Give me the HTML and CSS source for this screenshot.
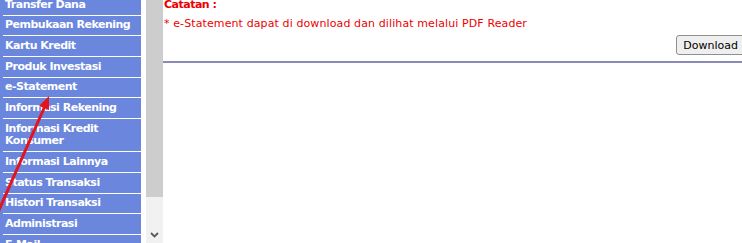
FILE: index.html
```html
<!DOCTYPE html>
<html lang="id">
<head>
    <meta charset="UTF-8">
    <title>e-Statement</title>
    <link rel="stylesheet" href="styles.css">
</head>
<body>
    <div class="frame">
        <div class="sidebar">
            <div class="menu">
                <ul>
                    <li><a href="#">Transfer Dana</a></li>
                    <li><a href="#">Pembukaan Rekening</a></li>
                    <li><a href="#">Kartu Kredit</a></li>
                    <li><a href="#">Produk Investasi</a></li>
                    <li><a href="#">e-Statement</a></li>
                    <li><a href="#">Informasi Rekening</a></li>
                    <li><a href="#">Informasi Kredit Konsumer</a></li>
                    <li><a href="#">Informasi Lainnya</a></li>
                    <li><a href="#">Status Transaksi</a></li>
                    <li><a href="#">Histori Transaksi</a></li>
                    <li><a href="#">Administrasi</a></li>
                    <li><a href="#">E-Mail</a></li>
                </ul>
            </div>
            <div class="gap"></div>
            <div class="scrollbar">
                <div class="thumb"></div>
                <div class="track">
                    <svg class="arrow-down" width="9" height="6" viewBox="0 0 9 6">
                        <path d="M1 1 L4.5 4.5 L8 1" fill="none" stroke="#5a5a5a" stroke-width="1.8"/>
                    </svg>
                </div>
            </div>
        </div>

        <div class="main">
            <div class="note-title">Catatan :</div>
            <div class="note">* e-Statement dapat di download dan dilihat melalui PDF Reader</div>
            <div class="actions">
                <button type="button" class="btn">Download</button>
            </div>
            <div class="divider"></div>
        </div>
    </div>

    <!-- red annotation arrow drawn over the menu -->
    <svg class="annotation" width="60" height="243" viewBox="0 0 60 243">
        <line x1="-5" y1="219" x2="45" y2="106" stroke="#e3141c" stroke-width="3"/>
        <polygon points="49,96 49,110 39,106" fill="#e3141c"/>
    </svg>
</body>
</html>
```

FILE: styles.css
```css
html, body {
    margin: 0;
    padding: 0;
    overflow: hidden;
    background: #fff;
}

body {
    font-family: "DejaVu Sans", Verdana, sans-serif;
    font-size: 11px;
    width: 742px;
    height: 243px;
    position: relative;
}

.frame {
    display: flex;
    height: 243px;
}

.sidebar {
    display: flex;
    flex: none;
    width: 163px;
    height: 243px;
    overflow: hidden;
    background: #fff;
}

.menu {
    width: 141px;
    background: #6b86dd;
    overflow: hidden;
}

.menu ul {
    list-style: none;
    margin: -5px 0 0 0;
    padding: 0 0 0 3px;
}

.menu li a {
    display: block;
    padding: 3.6px 0 3.6px 2px;
    line-height: 12.5px;
    border-bottom: 1px solid #fff;
    color: #fff;
    font-weight: bold;
    letter-spacing: -0.5px;
    text-decoration: none;
}

.gap {
    width: 5px;
}

.scrollbar {
    width: 17px;
    display: flex;
    flex-direction: column;
}

.thumb {
    height: 197px;
    background: #cdcdcd;
}

.track {
    flex: 1;
    background: #f1f1f1;
    display: flex;
    justify-content: center;
    align-items: flex-end;
    padding-bottom: 5px;
}

.main {
    flex: none;
    width: 581px;
    padding-left: 1px;
    color: #e00;
}

.note-title {
    font-weight: bold;
    letter-spacing: -0.5px;
    line-height: 13px;
    margin-top: -2px;
}

.note {
    line-height: 13px;
    letter-spacing: 0.11px;
    margin-top: 6px;
}

.actions {
    display: flex;
    justify-content: flex-end;
    margin-top: 5px;
}

.btn {
    height: 20px;
    padding: 0 6px;
    font-family: "DejaVu Sans", Tahoma, sans-serif;
    font-size: 11px;
    color: #000;
    background: #efefef;
    border: 1px solid #8f8f8f;
    border-radius: 3px;
}

.divider {
    margin-top: 6px;
    margin-left: -1px;
    margin-right: -5px;
    height: 2px;
    background: #8a8ab9;
}

.annotation {
    position: absolute;
    left: 0;
    top: 0;
}
```
